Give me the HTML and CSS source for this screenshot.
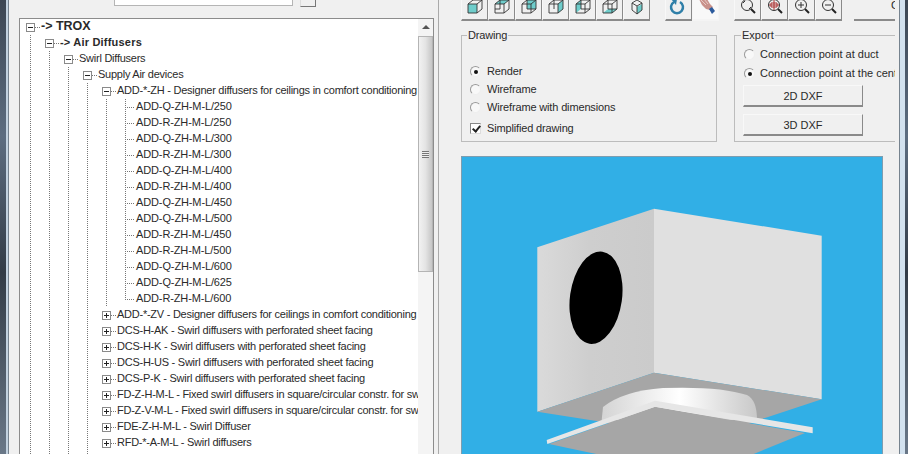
FILE: index.html
```html
<!DOCTYPE html>
<html lang="en">
<head>
  <meta charset="UTF-8" />
  <title>Diffuser selection</title>
  <link rel="stylesheet" href="styles.css">
</head>
<body>
  <div class="desk-edge desk-left"></div>
  <div class="window">
    <div class="left-pane">
      <div class="search-row">
        <div class="search-input"></div>
        <div class="search-btn"></div>
      </div>
      <div class="tree-box">
        <div class="tree">
          <div class="row"><span class="box minus"></span><span class="dash"></span><span class="lbl big">-&gt; TROX</span></div>
          <div class="row"><i class="g"></i><span class="box minus"></span><span class="dash"></span><span class="lbl bold">-&gt; Air Diffusers</span></div>
          <div class="row"><i class="g"></i><i class="g"></i><span class="box minus"></span><span class="dash"></span><span class="lbl">Swirl Diffusers</span></div>
          <div class="row"><i class="g"></i><i class="g"></i><i class="g"></i><span class="box minus"></span><span class="dash"></span><span class="lbl">Supply Air devices</span></div>
          <div class="row"><i class="g"></i><i class="g"></i><i class="g"></i><i class="g"></i><span class="box minus"></span><span class="dash"></span><span class="lbl">ADD-*-ZH - Designer diffusers for ceilings in comfort conditioning</span></div>
          <div class="row"><i class="g"></i><i class="g"></i><i class="g"></i><i class="g"></i><i class="g"></i><i class="g leaf"></i><span class="lbl">ADD-Q-ZH-M-L/250</span></div>
          <div class="row"><i class="g"></i><i class="g"></i><i class="g"></i><i class="g"></i><i class="g"></i><i class="g leaf"></i><span class="lbl">ADD-R-ZH-M-L/250</span></div>
          <div class="row"><i class="g"></i><i class="g"></i><i class="g"></i><i class="g"></i><i class="g"></i><i class="g leaf"></i><span class="lbl">ADD-Q-ZH-M-L/300</span></div>
          <div class="row"><i class="g"></i><i class="g"></i><i class="g"></i><i class="g"></i><i class="g"></i><i class="g leaf"></i><span class="lbl">ADD-R-ZH-M-L/300</span></div>
          <div class="row"><i class="g"></i><i class="g"></i><i class="g"></i><i class="g"></i><i class="g"></i><i class="g leaf"></i><span class="lbl">ADD-Q-ZH-M-L/400</span></div>
          <div class="row"><i class="g"></i><i class="g"></i><i class="g"></i><i class="g"></i><i class="g"></i><i class="g leaf"></i><span class="lbl">ADD-R-ZH-M-L/400</span></div>
          <div class="row"><i class="g"></i><i class="g"></i><i class="g"></i><i class="g"></i><i class="g"></i><i class="g leaf"></i><span class="lbl">ADD-Q-ZH-M-L/450</span></div>
          <div class="row"><i class="g"></i><i class="g"></i><i class="g"></i><i class="g"></i><i class="g"></i><i class="g leaf"></i><span class="lbl">ADD-Q-ZH-M-L/500</span></div>
          <div class="row"><i class="g"></i><i class="g"></i><i class="g"></i><i class="g"></i><i class="g"></i><i class="g leaf"></i><span class="lbl">ADD-R-ZH-M-L/450</span></div>
          <div class="row"><i class="g"></i><i class="g"></i><i class="g"></i><i class="g"></i><i class="g"></i><i class="g leaf"></i><span class="lbl">ADD-R-ZH-M-L/500</span></div>
          <div class="row"><i class="g"></i><i class="g"></i><i class="g"></i><i class="g"></i><i class="g"></i><i class="g leaf"></i><span class="lbl">ADD-Q-ZH-M-L/600</span></div>
          <div class="row"><i class="g"></i><i class="g"></i><i class="g"></i><i class="g"></i><i class="g"></i><i class="g leaf"></i><span class="lbl">ADD-Q-ZH-M-L/625</span></div>
          <div class="row"><i class="g"></i><i class="g"></i><i class="g"></i><i class="g"></i><i class="g"></i><i class="g leaf last"></i><span class="lbl">ADD-R-ZH-M-L/600</span></div>
          <div class="row"><i class="g"></i><i class="g"></i><i class="g"></i><i class="g"></i><span class="box plus"></span><span class="dash"></span><span class="lbl">ADD-*-ZV - Designer diffusers for ceilings in comfort conditioning</span></div>
          <div class="row"><i class="g"></i><i class="g"></i><i class="g"></i><i class="g"></i><span class="box plus"></span><span class="dash"></span><span class="lbl">DCS-H-AK - Swirl diffusers with perforated sheet facing</span></div>
          <div class="row"><i class="g"></i><i class="g"></i><i class="g"></i><i class="g"></i><span class="box plus"></span><span class="dash"></span><span class="lbl">DCS-H-K - Swirl diffusers with perforated sheet facing</span></div>
          <div class="row"><i class="g"></i><i class="g"></i><i class="g"></i><i class="g"></i><span class="box plus"></span><span class="dash"></span><span class="lbl">DCS-H-US - Swirl diffusers with perforated sheet facing</span></div>
          <div class="row"><i class="g"></i><i class="g"></i><i class="g"></i><i class="g"></i><span class="box plus"></span><span class="dash"></span><span class="lbl">DCS-P-K - Swirl diffusers with perforated sheet facing</span></div>
          <div class="row"><i class="g"></i><i class="g"></i><i class="g"></i><i class="g"></i><span class="box plus"></span><span class="dash"></span><span class="lbl">FD-Z-H-M-L - Fixed swirl diffusers in square/circular constr. for swirl</span></div>
          <div class="row"><i class="g"></i><i class="g"></i><i class="g"></i><i class="g"></i><span class="box plus"></span><span class="dash"></span><span class="lbl">FD-Z-V-M-L - Fixed swirl diffusers in square/circular constr. for swirl</span></div>
          <div class="row"><i class="g"></i><i class="g"></i><i class="g"></i><i class="g"></i><span class="box plus"></span><span class="dash"></span><span class="lbl">FDE-Z-H-M-L - Swirl Diffuser</span></div>
          <div class="row"><i class="g"></i><i class="g"></i><i class="g"></i><i class="g"></i><span class="box plus"></span><span class="dash"></span><span class="lbl">RFD-*-A-M-L - Swirl diffusers</span></div>
          <div class="row"><i class="g"></i><i class="g"></i><i class="g"></i><i class="g"></i><span class="box plus"></span><span class="dash"></span><span class="lbl">RFD-*-V - Swirl diffusers</span></div>
        </div>
        <div class="scrollbar">
          <div class="arrow"></div>
          <div class="thumb"><span class="grip"></span></div>
        </div>
      </div>
    </div>

    <div class="right-pane">
      <div class="toolbar">
        <div class="tool-group">
          <button class="tool"><svg class="ico" viewBox="0 0 16 16"><path class="fill" d="M1 5h9v9H1z"/><path class="line" d="M1 5h9v9H1zM1 5l5-4h9v9l-5 4M10 5l5-4"/></svg></button>
          <button class="tool"><svg class="ico" viewBox="0 0 16 16"><path class="fill" d="M1 5l5-4h9l-5 4z"/><path class="line" d="M1 5h9v9H1zM1 5l5-4h9v9l-5 4M10 5l5-4M6 1v9H1"/></svg></button>
          <button class="tool"><svg class="ico" viewBox="0 0 16 16"><path class="fill" d="M6 1h9v9H6z"/><path class="line" d="M1 5h9v9H1zM1 5l5-4h9v9l-5 4M10 5l5-4M6 1v9h9"/></svg></button>
          <button class="tool"><svg class="ico" viewBox="0 0 16 16"><path class="fill" d="M10 5l5-4v9l-5 4z"/><path class="line" d="M1 5h9v9H1zM1 5l5-4h9v9l-5 4M10 5l5-4M6 1v9"/></svg></button>
          <button class="tool"><svg class="ico" viewBox="0 0 16 16"><path class="fill" d="M1 5l5-4v9l-5 4z"/><path class="line" d="M1 5h9v9H1zM1 5l5-4h9v9l-5 4M10 5l5-4M6 1v9h9"/></svg></button>
          <button class="tool"><svg class="ico" viewBox="0 0 16 16"><path class="fill" d="M1 14l5-4h9l-5 4z"/><path class="line" d="M1 5h9v9H1zM1 5l5-4h9v9l-5 4M10 5l5-4M6 1v9h9"/></svg></button>
          <button class="tool"><svg class="ico" viewBox="0 0 16 16"><path class="fill" d="M8 8l5-3v6l-5 4z"/><path class="line" d="M8 1l5 3v7l-5 4-5-4V4zM3 4l5 3 5-3M8 7v8"/></svg></button>
        </div>
        <div class="tool-group rot-group">
          <button class="tool"><svg class="ico big-ico" viewBox="0 0 20 20"><path d="M5 3a6 6 0 1 0 6 0" fill="none" stroke="#2f7fa8" stroke-width="2.5"/><path d="M2 0h6l-1 6z" fill="#2f7fa8"/></svg></button>
          <button class="tool hand"><svg class="ico big-ico" viewBox="0 0 20 20"><path d="M3 0h8l3 5 3 3-3 3-4-1-4-4z" fill="#c9918a"/><path d="M5 1l5 5M8 0l4 5" stroke="#e6c8c2" fill="none"/><path d="M13 10l3-2 3 4-3 3z" fill="#2b5a9c"/></svg></button>
        </div>
        <div class="tool-group zoom-group">
          <button class="tool"><svg class="ico" viewBox="0 0 16 16"><circle class="lens" cx="7" cy="6" r="5.5"/><path class="lens" d="M5 2l-2 2M9 10l2-2"/><path class="hdl" d="M11 10l4 4"/></svg></button>
          <button class="tool"><svg class="ico" viewBox="0 0 16 16"><circle class="lens" cx="7" cy="6" r="5.5"/><path d="M7 1v10M2 6h10M4 4h6v4H4z" fill="none" stroke="#a33" stroke-width="1"/><path class="hdl" d="M11 10l4 4"/></svg></button>
          <button class="tool"><svg class="ico" viewBox="0 0 16 16"><circle class="lens" cx="7" cy="6" r="5.5"/><path class="lens" d="M7 3v6M4 6h6"/><path class="hdl" d="M11 10l4 4"/></svg></button>
          <button class="tool"><svg class="ico" viewBox="0 0 16 16"><circle class="lens" cx="7" cy="6" r="5.5"/><path class="lens" d="M4 6h6"/><path class="hdl" d="M11 10l4 4"/></svg></button>
        </div>
        <button class="tool wide"><span>C</span></button>
      </div>

      <div class="options">
        <fieldset class="group drawing">
          <legend>Drawing</legend>
          <label class="opt first"><span class="radio on"></span>Render</label>
          <label class="opt"><span class="radio"></span>Wireframe</label>
          <label class="opt"><span class="radio"></span>Wireframe with dimensions</label>
          <label class="opt check-row"><span class="check"></span>Simplified drawing</label>
        </fieldset>
        <fieldset class="group export">
          <legend>Export</legend>
          <label class="opt"><span class="radio"></span>Connection point at duct</label>
          <label class="opt second"><span class="radio on"></span>Connection point at the centre</label>
          <button class="dxf">2D DXF</button>
          <button class="dxf">3D DXF</button>
        </fieldset>
      </div>

      <div class="viewport">
        <svg class="model" viewBox="461 156 422 298">
          <defs>
            <linearGradient id="sideFace" x1="0" x2="1" y1="0" y2="0">
              <stop offset="0" stop-color="#dadada"/>
              <stop offset="0.45" stop-color="#cecece"/>
              <stop offset="1" stop-color="#cbcbcb"/>
            </linearGradient>
            <linearGradient id="neck" x1="0" x2="1" y1="0" y2="0">
              <stop offset="0" stop-color="#d4d4d4"/>
              <stop offset="0.5" stop-color="#ffffff"/>
              <stop offset="1" stop-color="#c8c8c8"/>
            </linearGradient>
          </defs>
          <rect x="461.5" y="156.5" width="421" height="300" fill="none" stroke="#7d9db0"/>
          <path fill="url(#sideFace)" d="M537.3 247.3 654 208.7V372.7L537.3 411.7z"/>
          <path fill="#e0e0e0" d="M654 208.7 821.7 235.7V399.3L654 372.7z"/>
          <path fill="#a6a6a6" d="M537.3 411.7 654 372.7 821.7 399.3 705 438z"/>
          <ellipse cx="596" cy="297.7" rx="26" ry="46.5" transform="rotate(8 596 297.7)" fill="#000"/>
          <path fill="url(#neck)" d="M601.7 420 603 407Q623 391 663 388 720 386 747 395 757 400 757 420z"/>
          <path fill="#a6a6a6" d="M549 444 655 406.7 805 433 700 476z"/>
          <path fill="#e6e6e6" d="M546.7 440 655 400.7 812.7 427.3V433.3L655 406.7 547.3 444z"/>
        </svg>
      </div>
    </div>
  </div>
  <div class="desk-edge desk-right"></div>
</body>
</html>
```

FILE: styles.css
```css
html, body {
  height: 100%;
  margin: 0;
  padding: 0;
}
body {
  display: flex;
  height: 454px;
  overflow: hidden;
  background: #f0f0f0;
  font-family: Tahoma, "Liberation Sans", Arial, sans-serif;
  font-size: 11px;
  color: #2a2a2a;
}
.desk-edge {
  flex: none;
  background: linear-gradient(180deg, #3c4653, #5d6d80 30%, #333c47 60%, #6a7888);
}
.desk-left {
  width: 6px;
  border-right: 2px solid #c3d2e0;
}
.desk-right {
  width: 3px;
  border-left: 5px solid #d3e2ef;
}
.window {
  flex: 1;
  display: flex;
  min-width: 0;
  background: #f0f0f0;
  border-left: 1px solid #76838f;
  border-right: 1px solid #76838f;
}

/* left side with the tree */
.left-pane {
  width: 430px;
  flex: none;
  padding-left: 10px;
  display: flex;
  flex-direction: column;
  border-right: 1px solid #aaa;
  box-sizing: border-box;
}
.search-row {
  height: 18px;
  flex: none;
  display: flex;
  align-items: flex-start;
  padding-left: 95px;
  gap: 7px;
}
.search-input {
  width: 177px;
  height: 5px;
  background: #fff;
  border: 1px solid #b5b5b5;
  border-top: none;
}
.search-btn {
  width: 14px;
  height: 6px;
  border-right: 1px solid #777;
  border-bottom: 1px solid #777;
  border-left: 1px solid #ddd;
}
.tree-box {
  flex: 1;
  width: 415px;
  display: flex;
  min-height: 0;
  background: #fff;
  border: 1px solid #8c8c8c;
  border-bottom: none;
  box-sizing: border-box;
}
.tree {
  width: 397px;
  flex: none;
  overflow: hidden;
  padding-left: 1px;
}
.row {
  display: flex;
  align-items: center;
  height: 16px;
  white-space: nowrap;
}
.g {
  flex: none;
  width: 19px;
  height: 16px;
  background: repeating-linear-gradient(180deg, #777 0 1px, transparent 1px 2px) 9px 0 / 1px 100% no-repeat;
}
.g.leaf {
  background:
    repeating-linear-gradient(180deg, #777 0 1px, transparent 1px 2px) 9px 0 / 1px 100% no-repeat,
    repeating-linear-gradient(90deg, #777 0 1px, transparent 1px 2px) 9px 8px / 10px 1px no-repeat;
}
.g.last {
  background:
    repeating-linear-gradient(180deg, #777 0 1px, transparent 1px 2px) 9px 0 / 1px 9px no-repeat,
    repeating-linear-gradient(90deg, #777 0 1px, transparent 1px 2px) 9px 8px / 10px 1px no-repeat;
}
.box {
  flex: none;
  position: relative;
  width: 7px;
  height: 7px;
  margin-left: 5px;
  border: 1px solid #8a8a8a;
  background: #fff;
}
.box::before {
  content: "";
  position: absolute;
  left: 1px;
  top: 3px;
  width: 5px;
  height: 1px;
  background: #222;
}
.plus::after {
  content: "";
  position: absolute;
  left: 3px;
  top: 1px;
  width: 1px;
  height: 5px;
  background: #222;
}
.dash {
  flex: none;
  width: 5px;
  height: 1px;
  background: repeating-linear-gradient(90deg, #777 0 1px, transparent 1px 2px);
}
.lbl {
  padding-left: 1px;
  padding-bottom: 2px;
  letter-spacing: -0.25px;
}
.leaf + .lbl {
  letter-spacing: -0.12px;
}
.lbl.bold {
  font-weight: bold;
  letter-spacing: 0.2px;
}
.lbl.big {
  font-weight: bold;
  font-size: 12.5px;
  letter-spacing: 0;
}
.scrollbar {
  flex: 1;
  background: #f4f4f4;
  display: flex;
  flex-direction: column;
  align-items: center;
}
.arrow {
  flex: none;
  height: 17px;
  width: 100%;
  position: relative;
}
.arrow::before {
  content: "";
  position: absolute;
  left: 4px;
  top: 6px;
  border-left: 4px solid transparent;
  border-right: 4px solid transparent;
  border-bottom: 4px solid #555;
}
.thumb {
  width: 15px;
  height: 236px;
  background: linear-gradient(90deg, #f2f2f2, #e4e4e4 50%, #c6c6c6);
  border: 1px solid #b4b4b4;
  box-sizing: border-box;
  display: flex;
  align-items: center;
  justify-content: center;
}
.grip {
  width: 7px;
  height: 7px;
  background: repeating-linear-gradient(180deg, #777 0 1px, #eee 1px 2px);
}

/* right side */
.right-pane {
  flex: 1;
  min-width: 0;
  padding-left: 22px;
  margin-right: 4px;
  display: flex;
  flex-direction: column;
  overflow: hidden;
}
.toolbar {
  flex: none;
  height: 21px;
  display: flex;
}
.tool-group {
  display: flex;
  flex: none;
}
.rot-group {
  margin-left: 15px;
}
.zoom-group {
  margin-left: 15px;
}
.tool {
  flex: none;
  width: 27px;
  height: 21px;
  padding: 0;
  background: #f0f0f0;
  border: none;
  border-left: 1px solid #f8f8f8;
  border-right: 1px solid #8a8a8a;
  border-bottom: 2px solid #8a8a8a;
  box-sizing: border-box;
  display: flex;
  align-items: flex-start;
  justify-content: center;
}
.hand {
  border-color: #f4f4f4;
  background: #f8f8f8;
}
.ico {
  width: 16px;
  height: 16px;
  margin-top: -1px;
}
.big-ico {
  width: 20px;
  height: 20px;
}
.fill {
  fill: #6fcdcb;
}
.line {
  fill: none;
  stroke: #333;
  stroke-width: 0.9;
}
.lens {
  fill: none;
  stroke: #333;
  stroke-width: 1;
}
.hdl {
  fill: none;
  stroke: #222;
  stroke-width: 2;
}
.wide {
  width: 41px;
  margin-left: 12px;
  padding-left: 37px;
  border-right: none;
  border-left: none;
  justify-content: flex-start;
  overflow: hidden;
  font: inherit;
  color: inherit;
  line-height: 10px;
}
.options {
  flex: none;
  display: flex;
  gap: 17px;
  margin-top: 8px;
  height: 127px;
}
.group {
  flex: none;
  margin: 0;
  border: 1px solid #bcbcbc;
  box-sizing: border-box;
  height: 113px;
  min-width: 0;
}
.group legend {
  margin-left: -3px;
  padding: 0 1px;
  line-height: 13px;
}
.drawing {
  width: 256px;
  padding: 20px 0 0 8px;
  letter-spacing: -0.15px;
}
.export {
  width: 161px;
  padding: 3px 0 0 9px;
  overflow: hidden;
  white-space: nowrap;
  border-right: none;
}
.opt {
  display: flex;
  align-items: center;
  height: 18px;
  gap: 6px;
}
.export .opt {
  gap: 5px;
}
.second {
  margin-top: 1px;
}
.check-row {
  margin-top: 3px;
}
.radio {
  flex: none;
  position: relative;
  width: 11px;
  height: 11px;
  border-radius: 50%;
  background: #f8f8f8;
  border-top: 1px solid #9a9a9a;
  border-left: 1px solid #9a9a9a;
  border-right: 1px solid #eee;
  border-bottom: 1px solid #eee;
  box-sizing: border-box;
}
.radio.on::before {
  content: "";
  position: absolute;
  left: 3px;
  top: 3px;
  width: 4px;
  height: 4px;
  border-radius: 50%;
  background: #111;
}
.check {
  flex: none;
  position: relative;
  width: 11px;
  height: 11px;
  background: #fff;
  border-top: 1px solid #888;
  border-left: 1px solid #888;
  border-right: 1px solid #ddd;
  border-bottom: 1px solid #ddd;
  box-sizing: border-box;
}
.check::before {
  content: "";
  position: absolute;
  left: 3px;
  top: 0;
  width: 3px;
  height: 6px;
  border-right: 2px solid #222;
  border-bottom: 2px solid #222;
  transform: rotate(40deg);
}
.dxf {
  display: block;
  width: 120px;
  height: 22px;
  margin: 7px 0 0 -1px;
  padding: 1px 0 0;
  background: #f0f0f0;
  border: none;
  border-top: 1px solid #f8f8f8;
  border-left: 1px solid #f8f8f8;
  border-right: 1px solid #8a8a8a;
  border-bottom: 2px solid #8a8a8a;
  font: inherit;
  color: inherit;
}
.opt + .dxf {
  margin-top: 3px;
}
.viewport {
  flex: 1;
  width: 422px;
  background: #31afe6;
  min-height: 0;
}
.model {
  display: block;
  width: 422px;
  height: 298px;
}
```
